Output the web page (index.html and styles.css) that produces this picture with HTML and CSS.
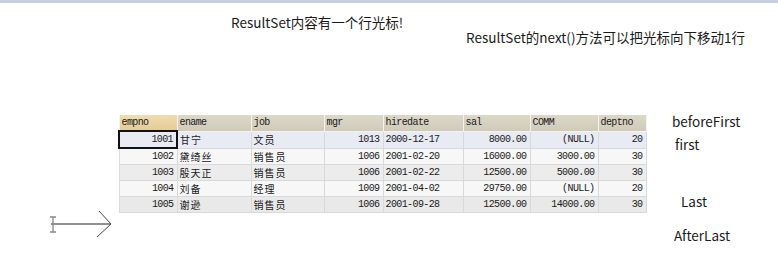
FILE: index.html
```html
<!DOCTYPE html>
<html>
<head>
<meta charset="utf-8">
<link rel="stylesheet" href="styles.css">
</head>
<body>
<div class="topbar"></div>
<div class="canvas">
  <p class="note note1">ResultSet内容有一个行光标!</p>
  <p class="note note2">ResultSet的next()方法可以把光标向下移动1行</p>
  <p class="note lbl-before">beforeFirst</p>
  <p class="note lbl-first">first</p>
  <p class="note lbl-last">Last</p>
  <p class="note lbl-after">AfterLast</p>
  <svg class="arrow" width="70" height="34" viewBox="0 0 70 34">
    <path d="M4 17 H64" stroke="#222" stroke-width="1.2" fill="none"/>
    <path d="M52 4 L64 17 L50 30" stroke="#444" stroke-width="1" fill="none"/>
    <path d="M3 10 H9 M6 10 V25 M3 25 H9" stroke="#888" stroke-width="1.3" fill="none"/>
  </svg>
  <table class="grid">
    <colgroup>
      <col class="c1"><col class="c2"><col class="c3"><col class="c4"><col class="c5"><col class="c6"><col class="c7"><col class="c8">
    </colgroup>
    <thead>
      <tr>
        <th class="sel">empno</th><th>ename</th><th>job</th><th>mgr</th><th>hiredate</th><th>sal</th><th>COMM</th><th>deptno</th>
      </tr>
    </thead>
    <tbody>
      <tr class="r1">
        <td class="num focus">1001</td><td class="cjk">甘宁</td><td class="cjk">文员</td><td class="num">1013</td><td>2000-12-17</td><td class="num">8000.00</td><td class="num">(NULL)</td><td class="num">20</td>
      </tr>
      <tr class="r2">
        <td class="num">1002</td><td class="cjk">黛绮丝</td><td class="cjk">销售员</td><td class="num">1006</td><td>2001-02-20</td><td class="num">16000.00</td><td class="num">3000.00</td><td class="num">30</td>
      </tr>
      <tr class="r3">
        <td class="num">1003</td><td class="cjk">殷天正</td><td class="cjk">销售员</td><td class="num">1006</td><td>2001-02-22</td><td class="num">12500.00</td><td class="num">5000.00</td><td class="num">30</td>
      </tr>
      <tr class="r4">
        <td class="num">1004</td><td class="cjk">刘备</td><td class="cjk">经理</td><td class="num">1009</td><td>2001-04-02</td><td class="num">29750.00</td><td class="num">(NULL)</td><td class="num">20</td>
      </tr>
      <tr class="r5">
        <td class="num">1005</td><td class="cjk">谢逊</td><td class="cjk">销售员</td><td class="num">1006</td><td>2001-09-28</td><td class="num">12500.00</td><td class="num">14000.00</td><td class="num">30</td>
      </tr>
    </tbody>
  </table>
</div>
</body>
</html>
```
FILE: styles.css
```css
html, body {
  margin: 0;
  padding: 0;
  background: #ffffff;
}
body {
  width: 778px;
  height: 263px;
  overflow: hidden;
  font-family: "Noto Sans", "Noto Sans CJK SC", sans-serif;
}
.topbar {
  height: 3px;
  background: #c5cfe1;
}
.canvas {
  position: relative;
  height: 260px;
  padding: 112px 0 0 118px;
  box-sizing: border-box;
}
.note {
  position: absolute;
  margin: 0;
  font-family: "Noto Sans CJK SC", "Noto Sans", sans-serif;
  font-size: 13.5px;
  line-height: 16px;
  color: #1a1a1a;
  white-space: nowrap;
}
.note1 { left: 231px; top: 11px; }
.note2 { left: 466px; top: 26px; }
.lbl-before { left: 672px; top: 110px; }
.lbl-first { left: 675px; top: 133px; }
.lbl-last { left: 681px; top: 190px; }
.lbl-after { left: 674px; top: 224px; }
.arrow {
  position: absolute;
  left: 47px;
  top: 204px;
}
.grid {
  border-collapse: collapse;
  table-layout: fixed;
  width: 527px;
  font-family: "Liberation Mono", "Noto Sans CJK SC", monospace;
  font-size: 10px;
  letter-spacing: -0.6px;
  color: #1a1a1a;
}
.c1 { width: 58px; }
.c2 { width: 74px; }
.c3 { width: 73px; }
.c4 { width: 59px; }
.c5 { width: 80px; }
.c6 { width: 67px; }
.c7 { width: 68px; }
.c8 { width: 48px; }
.grid th {
  height: 15px;
  padding: 0 2px;
  text-align: left;
  font-weight: normal;
  background: linear-gradient(#dcd8c8, #cfcab8);
  border: 1px solid #f4f3ee;
  border-top: none;
  white-space: nowrap;
  overflow: hidden;
}
.grid th.sel {
  background: linear-gradient(#f0dcae, #e4cc98);
}
.grid td {
  height: 15px;
  padding: 0 2px 0 2px;
  border: 1px solid #d9d9d9;
  white-space: nowrap;
  overflow: hidden;
}
.grid td.num { text-align: right; padding-right: 3px; }
.grid td.cjk {
  font-family: "Noto Sans CJK SC", sans-serif;
  font-size: 10px;
  letter-spacing: 1px;
}
.grid td.focus {
  border: 2px solid #111;
}
.r1 td { background: #e8eaf4; }
.r2 td { background: #f7f7f7; }
.r3 td { background: #ececec; }
.r4 td { background: #f7f7f7; }
.r5 td { background: #e9e9e9; }
```
